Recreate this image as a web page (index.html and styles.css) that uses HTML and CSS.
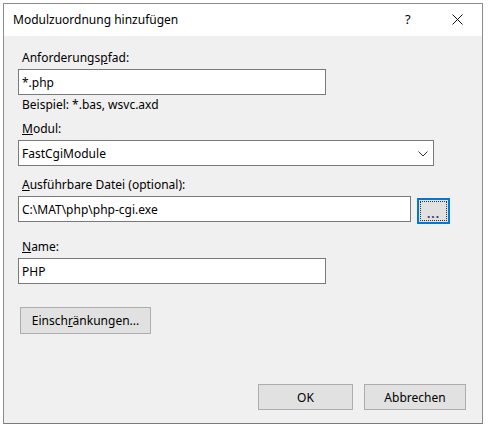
FILE: index.html
```html
<!DOCTYPE html>
<html lang="de">
<head>
    <meta charset="UTF-8">
    <title>Modulzuordnung hinzufügen</title>
    <link rel="stylesheet" href="styles.css">
</head>
<body>

<div class="dialog">
    <div class="titlebar">
        <span class="title">Modulzuordnung hinzufügen</span>
        <span class="help">?</span>
        <span class="close">
            <svg width="11" height="11" viewBox="0 0 11 11">
                <path d="M0.5 0.5 L10.5 10.5 M10.5 0.5 L0.5 10.5" stroke="#111" stroke-width="1" fill="none"/>
            </svg>
        </span>
    </div>

    <div class="content">
        <label class="label first">Anforderungs<u>p</u>fad:</label>
        <div class="field short">*.php</div>
        <div class="hint">Beispiel: *.bas, wsvc.axd</div>

        <label class="label module"><u>M</u>odul:</label>
        <div class="field select">
            <span>FastCgiModule</span>
            <svg width="10" height="6" viewBox="0 0 10 6">
                <path d="M0.5 0.5 L5 5 L9.5 0.5" stroke="#333" stroke-width="1" fill="none"/>
            </svg>
        </div>

        <label class="label exec"><u>A</u>usführbare Datei (optional):</label>
        <div class="row">
            <div class="field path">C:\MAT\php\php-cgi.exe</div>
            <button class="btn browse"><span class="focus">...</span></button>
        </div>

        <label class="label name"><u>N</u>ame:</label>
        <div class="field short">PHP</div>

        <button class="btn restrict">Einsch<u>r</u>änkungen...</button>

        <div class="actions">
            <button class="btn action">OK</button>
            <button class="btn action">Abbrechen</button>
        </div>
    </div>
</div>

</body>
</html>
```

FILE: styles.css
```css
body {
    margin: 0;
    background-color: #ffffff;
    font-family: "Noto Sans", "Open Sans", sans-serif;
    font-size: 12px;
    color: #000;
}

.dialog {
    margin: 3px 0 0 3px;
    width: 478px;
    height: 419px;
    border: 1px solid #8c8c8c;
    border-bottom-color: #7a7a7a;
    background-color: #f0f0f0;
    display: flex;
    flex-direction: column;
}

.titlebar {
    height: 32px;
    background-color: #fff;
    display: flex;
    align-items: center;
    padding-left: 9px;
}

.title {
    flex: 1;
    font-size: 12px;
    padding-bottom: 2px;
}

.help {
    width: 16px;
    margin-right: 31px;
    font-size: 13px;
    padding-bottom: 2px;
}

.close {
    width: 11px;
    margin-right: 19px;
    display: flex;
    padding-bottom: 1px;
}

.content {
    flex: 1;
    padding: 12px 0 0 14px;
    display: flex;
    flex-direction: column;
    align-items: flex-start;
}

/* every label sits 3px above its field */
.label {
    display: block;
    line-height: 16px;
    margin: 8px 0 3px 4px;
}

.label.first {
    margin-top: 2px;
}

.label.exec {
    margin-top: 11px;
}

.label.name {
    margin-top: 15px;
}

.hint {
    line-height: 16px;
    margin: 2px 0 0 4px;
}

.field {
    box-sizing: border-box;
    height: 26px;
    border: 1px solid #7a7a7a;
    background-color: #fff;
    padding: 0 3px;
    display: flex;
    align-items: center;
}

.short {
    width: 308px;
}

.select {
    width: 416px;
    justify-content: space-between;
    padding-right: 5px;
}

.select svg {
    margin-top: 1px;
}

.row {
    display: flex;
    align-items: flex-start;
}

.path {
    width: 393px;
}

.btn {
    box-sizing: border-box;
    font-family: inherit;
    font-size: 12px;
    color: #000;
    background-color: #e1e1e1;
    border: 1px solid #adadad;
    padding: 0;
    margin: 0;
}

.browse {
    width: 33px;
    height: 26px;
    margin: 2px 0 0 6px;
    border: 2px solid #0078d7;
    padding: 1px;
    display: flex;
}

.browse .focus {
    flex: 1;
    border: 1px dotted #333;
    display: flex;
    align-items: center;
    justify-content: center;
    padding-top: 4px;
    color: #4b2c6b;
    font-weight: bold;
    letter-spacing: 1px;
}

.restrict {
    width: 131px;
    height: 27px;
    margin: 23px 0 0 2px;
}

.actions {
    display: flex;
    gap: 11px;
    margin-top: 50px;
    margin-left: 240px;
}

.action {
    width: 95px;
    height: 26px;
}

.action + .action {
    width: 102px;
}
```
